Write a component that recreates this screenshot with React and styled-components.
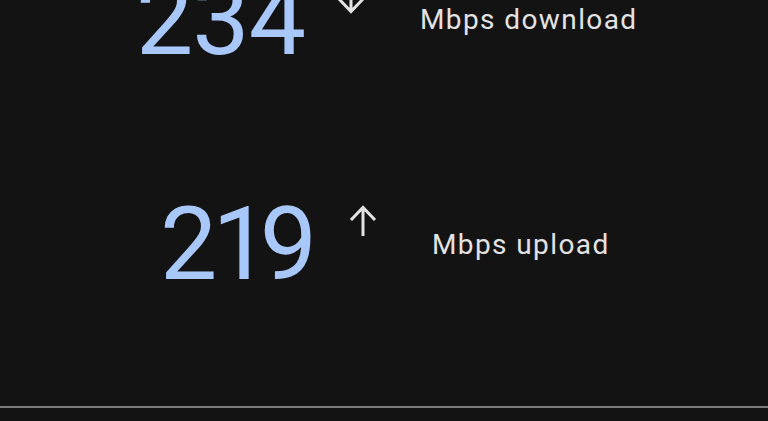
import React from "react";
import styled, { createGlobalStyle } from "styled-components";

const Global = createGlobalStyle`
  html, body {
    margin: 0;
    padding: 0;
    background: #131313;
    overflow: hidden;
  }
  body {
    font-family: Roboto, "Noto Sans", sans-serif;
  }
`;

const results = [
  { value: "234", label: "Mbps download", dir: "down", indent: 105 },
  { value: "219", label: "Mbps upload", dir: "up", indent: 117 },
];

export default function App() {
  return (
    <Page>
      <Global />
      <Results>
        {results.map((r) => (
          <Row key={r.label} indent={r.indent}>
            <Value>{r.value}</Value>
            <Arrow dir={r.dir} />
            <Label>{r.label}</Label>
          </Row>
        ))}
      </Results>
      <Divider />
    </Page>
  );
}

function Arrow({ dir }) {
  return (
    <ArrowBox $dir={dir}>
      <svg width="30" height="33" viewBox="0 0 30 33" fill="none">
        <path
          d="M15 32 V4 M3 16 L15 3.5 L27 16"
          stroke="#e3e3e3"
          strokeWidth="3"
        />
      </svg>
    </ArrowBox>
  );
}

const Page = styled.div`
  width: 768px;
  height: 421px;
  background: #131313;
  display: flex;
  flex-direction: column;
  overflow: hidden;
`;

const Results = styled.div`
  display: flex;
  flex-direction: column;
  gap: 126px;
  margin-top: -29px;
`;

const Row = styled.div`
  display: flex;
  align-items: flex-start;
  padding-left: ${(p) => p.indent}px;
`;

const Value = styled.div`
  width: 200px;
  margin-top: -3px;
  text-align: right;
  font-size: 102px;
  line-height: 1;
  color: #a8c7fa;
  font-variant-numeric: proportional-nums;
  letter-spacing: -1px;
`;

const ArrowBox = styled.div`
  margin-left: 31px;
  margin-top: ${(p) => (p.$dir === "down" ? 11 : 8)}px;
  transform: ${(p) => (p.$dir === "down" ? "rotate(180deg)" : "none")};
  line-height: 0;
`;

const Label = styled.div`
  margin-left: 54px;
  margin-top: 35px;
  font-size: 28px;
  line-height: 1;
  letter-spacing: 1.4px;
  color: #e3e3e3;
`;

const Divider = styled.div`
  margin-top: 111px;
  height: 2px;
  background: #7b7b7b;
`;
